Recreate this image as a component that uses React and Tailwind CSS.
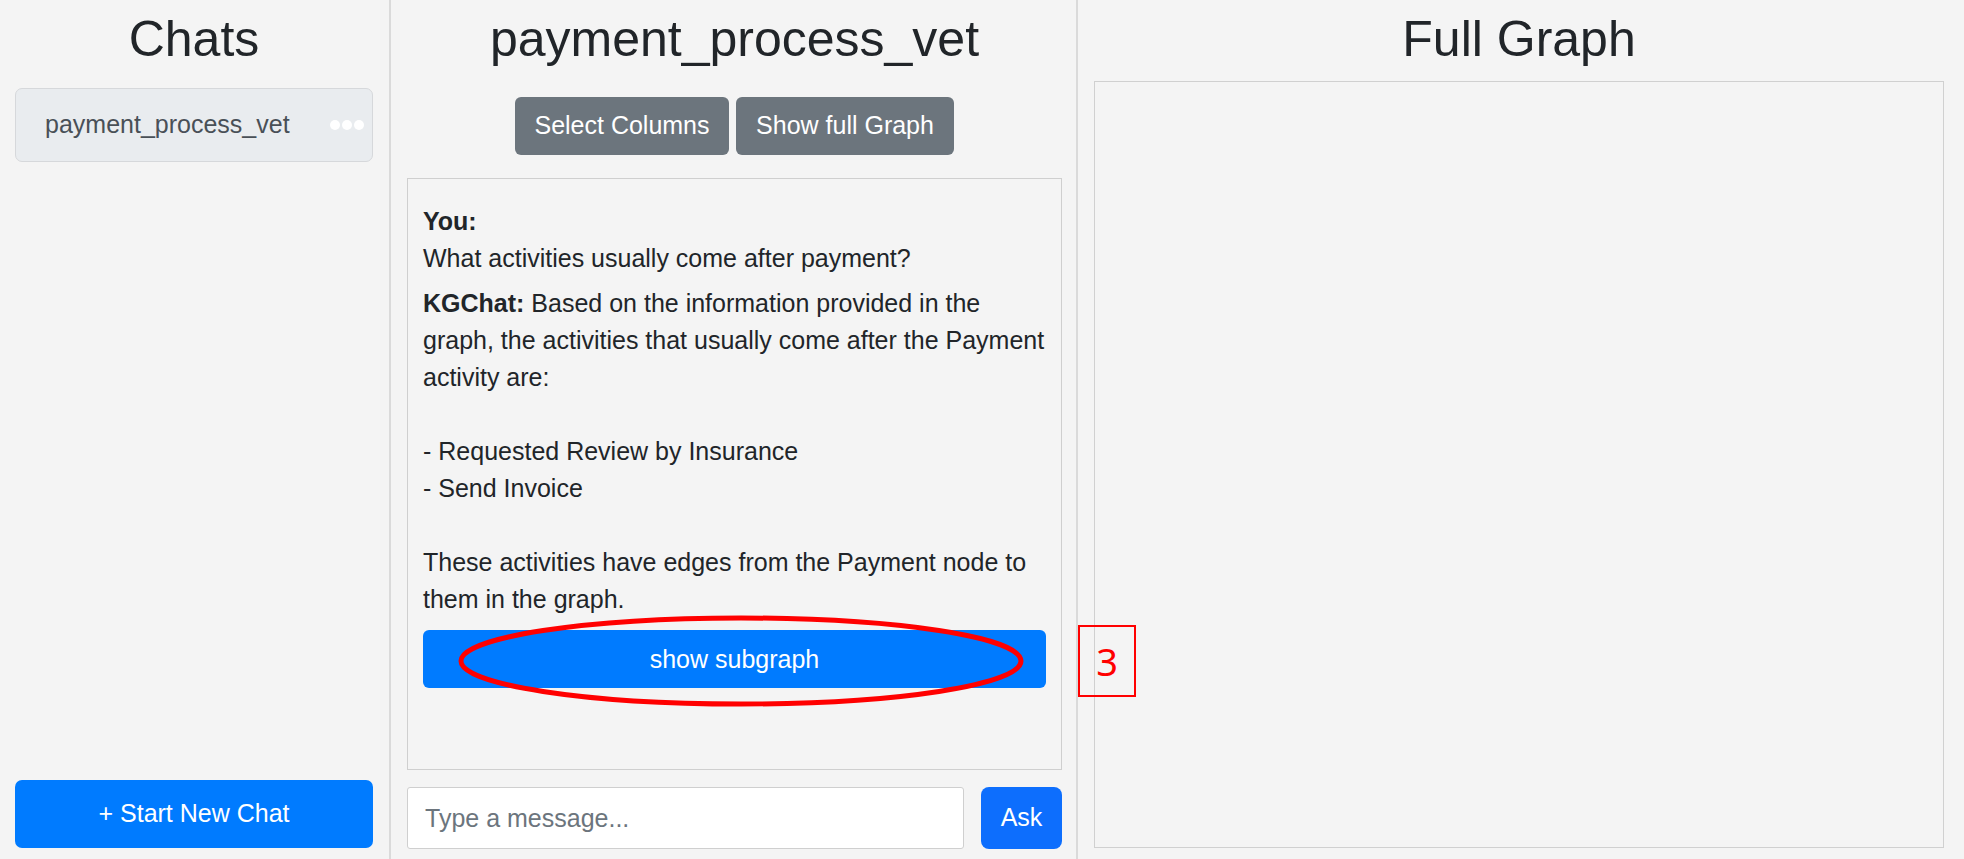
import React from 'react';

const answer = `Based on the information provided in the graph, the activities that usually come after the Payment activity are:

- Requested Review by Insurance
- Send Invoice

These activities have edges from the Payment node to them in the graph.`;

function Sidebar() {
  return (
    <aside className="flex w-[391px] shrink-0 flex-col border-r-2 border-[#dadada] pl-[15px] pr-[16px] pt-[10px] pb-[11px]">
      <h2 className="text-center text-[50px] leading-[58px]">Chats</h2>
      <div className="mt-[20px] flex h-[74px] items-center justify-between rounded-[7px] border border-[#d6d8db] bg-[#e9ecef] pl-[29px] pr-[8px] text-[25px] text-[#495057]">
        <span>payment_process_vet</span>
        <div className="flex gap-[2px]">
          <span className="h-[10px] w-[10px] rounded-full bg-white" />
          <span className="h-[10px] w-[10px] rounded-full bg-white" />
          <span className="h-[10px] w-[10px] rounded-full bg-white" />
        </div>
      </div>
      <div className="flex-1" />
      <button className="h-[68px] w-full rounded-[7px] bg-[#007bff] text-[25px] text-white">
        + Start New Chat
      </button>
    </aside>
  );
}

function ChatPanel() {
  return (
    <main className="flex w-[687px] shrink-0 flex-col border-r-2 border-[#dadada] pl-[16px] pr-[14px] pt-[10px] pb-[10px]">
      <h2 className="text-center text-[50px] leading-[58px]">payment_process_vet</h2>
      <div className="mt-[29px] flex justify-center gap-[7px]">
        <button className="h-[58px] w-[214px] rounded-[6px] bg-[#6c757d] text-[25px] text-white">Select Columns</button>
        <button className="h-[58px] w-[218px] rounded-[6px] bg-[#6c757d] text-[25px] text-white">Show full Graph</button>
      </div>

      <div className="mt-[23px] flex-1 overflow-y-auto border border-[#cfcfcf] px-[15px] pt-[24px] text-[25px] leading-[37px]">
        <div className="mb-[8px]">
          <strong className="block font-bold">You:</strong>
          <div>What activities usually come after payment?</div>
        </div>
        <div className="mr-[-6px] whitespace-pre-wrap">
          <strong className="font-bold">KGChat:</strong> {answer}
        </div>
        <button className="mt-[12px] h-[58px] w-full rounded-[6px] bg-[#007bff] text-[25px] text-white">
          show subgraph
        </button>
      </div>

      <div className="mt-[17px] flex h-[62px] gap-[17px]">
        <input
          type="text"
          placeholder="Type a message..."
          className="h-full flex-1 rounded-[3px] border border-[#cfcfcf] bg-white px-[17px] text-[25px] text-[#212529] placeholder:text-[#6c757d] outline-none"
        />
        <button className="h-full w-[81px] rounded-[8px] bg-[#0d6efd] text-[25px] text-white">Ask</button>
      </div>
    </main>
  );
}

function GraphPanel() {
  return (
    <section className="flex flex-1 flex-col pl-[16px] pr-[20px] pt-[10px] pb-[11px]">
      <h2 className="text-center text-[50px] leading-[58px]">Full Graph</h2>
      <div className="mt-[13px] flex-1 border border-[#d0d0d0]" />
    </section>
  );
}

export default function App() {
  return (
    <div className="relative flex h-[859px] w-[1964px] overflow-hidden bg-[#f4f4f4] font-['Liberation_Sans',Arial,sans-serif] text-[#212529]">
      <Sidebar />
      <ChatPanel />
      <GraphPanel />

      {/* annotation marks on top of the screenshot */}
      <svg className="pointer-events-none absolute left-0 top-0" width="1964" height="859">
        <ellipse cx="741" cy="661" rx="280" ry="43" fill="none" stroke="#ff0000" strokeWidth="5" />
      </svg>
      <div className="pointer-events-none absolute left-[1078px] top-[625px] flex h-[72px] w-[58px] items-center justify-center border-2 border-[#ff0000] font-['Noto_Sans',sans-serif] text-[38px] leading-none text-[#ff0000]">
        3
      </div>
    </div>
  );
}
